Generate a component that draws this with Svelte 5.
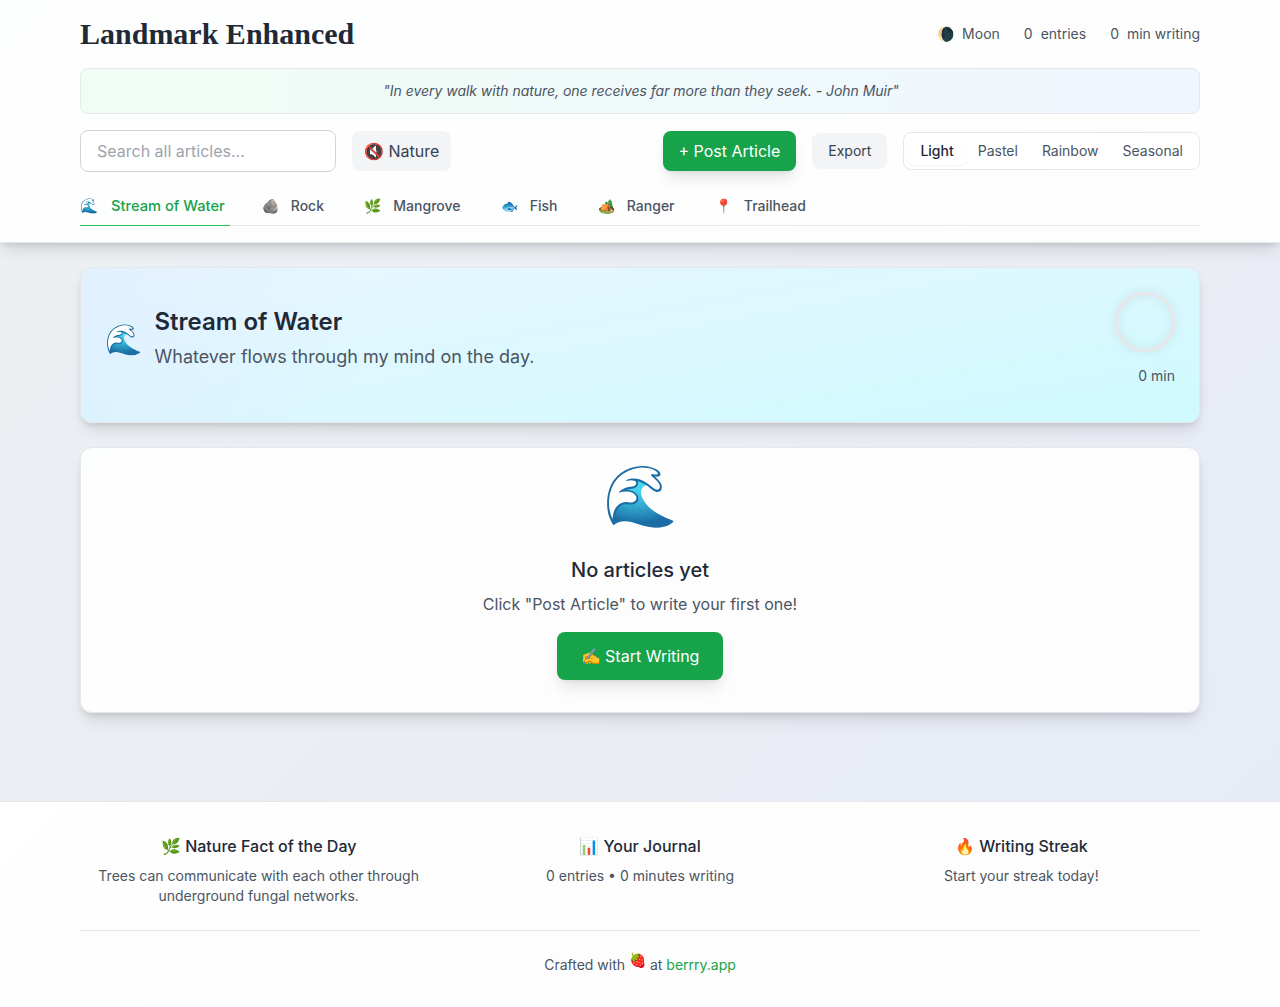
<script lang="ts">
const tabs = [
	{ icon: "🌊", label: "Stream of Water" },
	{ icon: "🪨", label: "Rock" },
	{ icon: "🌿", label: "Mangrove" },
	{ icon: "🐟", label: "Fish" },
	{ icon: "🏕️", label: "Ranger" },
	{ icon: "📍", label: "Trailhead" },
];
const themes = ["Light", "Pastel", "Rainbow", "Seasonal"];

let activeTab = $state("Stream of Water");
let theme = $state("Light");
let search = $state("");
</script>

<header>
	<div class="container">
		<div class="top">
			<h1>Landmark Enhanced</h1>
			<div class="stats">
				<div class="stat"><span>🌘</span><span>Moon</span></div>
				<div class="stat"><span>0</span><span>entries</span></div>
				<div class="stat"><span>0</span><span>min writing</span></div>
			</div>
		</div>

		<div class="quote">"In every walk with nature, one receives far more than they seek. - John Muir"</div>

		<div class="controls">
			<div class="group">
				<input type="text" placeholder="Search all articles..." bind:value={search} />
				<button class="sound">🔇 Nature</button>
			</div>
			<div class="group">
				<button class="primary">+ Post Article</button>
				<button class="export">Export</button>
				<div class="themes">
					{#each themes as name}
						<button class:selected={theme === name} onclick={() => (theme = name)}>{name}</button>
					{/each}
				</div>
			</div>
		</div>

		<nav>
			{#each tabs as tab}
				<button class:active={activeTab === tab.label} onclick={() => (activeTab = tab.label)}>
					<span>{tab.icon}</span>
					<span>{tab.label}</span>
				</button>
			{/each}
		</nav>
	</div>
</header>

<main class="container">
	<section class="hero">
		<div class="hero-info">
			<span class="hero-icon">🌊</span>
			<div>
				<h2>Stream of Water</h2>
				<p>Whatever flows through my mind on the day.</p>
			</div>
		</div>
		<div class="progress">
			<svg width="60" height="60" viewBox="0 0 60 60">
				<circle cx="30" cy="30" r="28.5" fill="none" stroke="#e5e7eb" stroke-width="3.5" />
			</svg>
			<span>0 min</span>
		</div>
	</section>

	<section class="empty">
		<div class="empty-icon">🌊</div>
		<h3>No articles yet</h3>
		<p>Click "Post Article" to write your first one!</p>
		<button class="primary large">✍️ Start Writing</button>
	</section>
</main>

<footer>
	<div class="container">
		<div class="facts">
			<div>
				<h4>🌿 Nature Fact of the Day</h4>
				<p>Trees can communicate with each other through underground fungal networks.</p>
			</div>
			<div>
				<h4>📊 Your Journal</h4>
				<p>0 entries • 0 minutes writing</p>
			</div>
			<div>
				<h4>🔥 Writing Streak</h4>
				<p>Start your streak today!</p>
			</div>
		</div>
		<div class="credit">
			Crafted with <span class="berry">🍓</span> at <a href="#berrry">berrry.app</a>
		</div>
	</div>
</footer>

<style>
:global(body) {
	background: linear-gradient(135deg, #edf0f3, #eaedf2 50%, #e8ecf5 75%, #e7ebf5);
	font-family: Inter, sans-serif;
	font-size: 16px;
	line-height: 24px;
	color: #1f2937;
}

:global(*) {
	box-sizing: border-box;
}

h1, h2, h3, h4, p {
	margin: 0;
}

button {
	border: none;
	padding: 0;
	background: none;
	font: inherit;
	cursor: pointer;
}

.container {
	width: 1120px;
	margin: 0 auto;
}

header {
	padding: 16px 0;
	background: linear-gradient(135deg, #fdfffe, #fdfdfd);
	border-bottom: 1px solid #e5e7eb;
	box-shadow: 0 10px 15px -3px rgba(0, 0, 0, .1), 0 4px 6px -2px rgba(0, 0, 0, .1);
}

.top {
	display: flex;
	justify-content: space-between;
	align-items: center;
}

h1 {
	font: bold 30px/36px "Liberation Serif", serif;
}

.stats {
	display: flex;
	gap: 24px;
	font-size: 14px;
	line-height: 20px;
	color: #4b5563;
}

.stat {
	display: flex;
	gap: 8px;
}

.quote {
	margin: 16px 0;
	padding: 12px 11px 12px 13px;
	border: 1px solid #e5e7eb;
	border-radius: 8px;
	background: linear-gradient(90deg, #f0fdf4, #eff6ff);
	font-size: 14px;
	line-height: 20px;
	font-style: italic;
	letter-spacing: -.03px;
	text-align: center;
	color: #4b5563;
}

.controls {
	display: flex;
	justify-content: space-between;
	align-items: center;
	margin-bottom: 16px;
}

.group {
	display: flex;
	align-items: center;
	gap: 16px;
}

input {
	width: 256px;
	height: 42px;
	padding: 8px 16px;
	border: 1px solid #d1d5db;
	border-radius: 8px;
	background: #fff;
	font: inherit;

	&::placeholder {
		color: #9ca3af;
	}
}

.sound {
	padding: 8px 12px;
	border-radius: 8px;
	background: #f3f4f6;
	color: #374151;
}

.primary {
	padding: 8px 16px;
	border-radius: 8px;
	background: #16a34a;
	color: #fff;
	box-shadow: 0 10px 15px -3px rgba(0, 0, 0, .1), 0 4px 6px -4px rgba(0, 0, 0, .1);
}

.export {
	padding: 8px 16px;
	border-radius: 8px;
	background: #f3f4f6;
	font-size: 14px;
	line-height: 20px;
	color: #374151;
}

.themes {
	display: flex;
	padding: 4px;
	border: 1px solid #e5e7eb;
	border-radius: 8px;
	background: #fff;

	& button {
		padding: 4px 12px;
		border-radius: 6px;
		font-size: 14px;
		line-height: 20px;
		color: #4b5563;
	}

	& .selected {
		color: #1f2937;
		font-weight: 500;
		box-shadow: 0 1px 2px rgba(0, 0, 0, .06);
	}
}

nav {
	display: flex;
	gap: 32px;
	border-bottom: 1px solid #e5e7eb;

	& button {
		display: flex;
		gap: 12px;
		height: 38px;
		margin-bottom: -1px;
		padding: 8px 8.3px 9px 0;
		border-bottom: 1px solid transparent;
		font-size: 14px;
		font-weight: 500;
		line-height: 20px;
		color: #4b5563;
	}

	& .active {
		gap: 13px;
		padding-right: 5px;
		border-color: #22c55e;
		font-size: 14.7px;
		color: #16a34a;
	}
}

main {
	padding: 24px 0 88px;
}

.hero,
.empty {
	border: 1px solid #e5e7eb;
	border-radius: 12px;
	box-shadow: 0 10px 15px -3px rgba(0, 0, 0, .1), 0 4px 6px -2px rgba(0, 0, 0, .1);
}

.hero {
	display: flex;
	justify-content: space-between;
	height: 156px;
	margin-bottom: 24px;
	padding: 24px;
	background:
		linear-gradient(90deg, rgba(219, 234, 254, .45), rgba(219, 234, 254, 0) 25%),
		linear-gradient(170deg, #e9f6ff, #cffafe);
}

.hero-info {
	display: flex;
	align-items: center;
	gap: 12.5px;
	height: 94px;

	& h2 {
		margin-top: -1px;
		font-size: 24px;
		font-weight: 600;
		line-height: 32px;
	}

	& p {
		margin-top: 5px;
		font-size: 18px;
		line-height: 28px;
		color: #4b5563;
	}
}

.hero-icon {
	font-size: 30px;
	line-height: 36px;
}

.progress {
	display: flex;
	flex-direction: column;
	align-items: flex-end;
	font-size: 14px;
	line-height: 20px;
	color: #4b5563;

	& svg {
		margin-bottom: 14px;
		filter: drop-shadow(0 0 4px rgba(0, 0, 0, .1));
		overflow: visible;
	}
}

.empty {
	height: 266px;
	text-align: center;
	background: linear-gradient(135deg, #fdfffe, #fdfdfd 50%);

	& h3 {
		font-size: 20px;
		font-weight: 500;
		line-height: 28px;
	}

	& p {
		margin: 8px 0 16px;
		color: #4b5563;
	}
}

.empty-icon {
	margin-bottom: 14px;
	font-size: 60px;
	line-height: 94px;
}

.large {
	padding: 12px 24px;
}

footer {
	border-top: 1px solid #e5e7eb;
	padding: 32px 0;
	background: linear-gradient(135deg, #fefffe, #fdfdfd 30%);
}

.facts {
	display: grid;
	grid-template-columns: repeat(3, 1fr);
	gap: 24px;
	text-align: center;

	& h4 {
		font-size: 16px;
		font-weight: 500;
		margin-bottom: 8px;
	}

	& p {
		padding: 0 16px;
		font-size: 14px;
		line-height: 20px;
		color: #4b5563;
	}
}

.credit {
	margin-top: 24px;
	padding-top: 24px;
	border-top: 1px solid #e5e7eb;
	text-align: center;
	font-size: 14px;
	line-height: 20px;
	color: #4b5563;

	& a {
		color: #16a34a;
		text-decoration: none;
	}
}

.berry {
	display: inline-block;
	transform: translateY(-5px);
}
</style>
